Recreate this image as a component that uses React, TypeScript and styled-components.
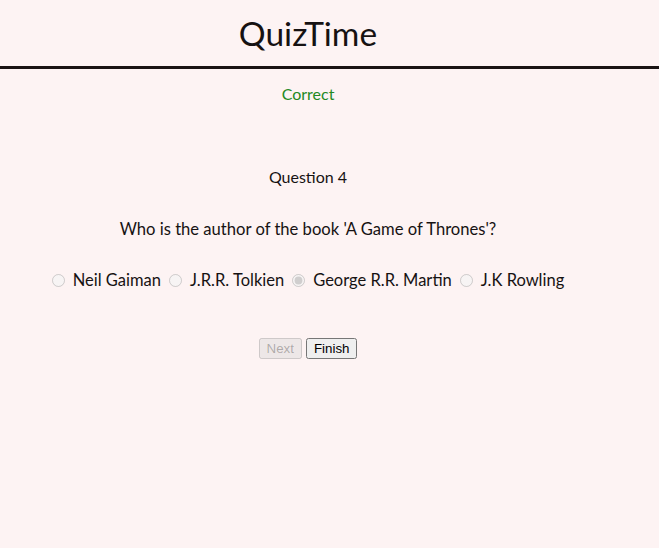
import React from "react";
import styled, { createGlobalStyle } from "styled-components";

const Global = createGlobalStyle`
    html, body {
        margin: 0;
        padding: 0;
        background: #fdf3f3;
        color: #161212;
        font-family: Lato, "Noto Sans", sans-serif;
    }
`;

const Header = {
    Root: styled.header`
        height: 66px;
        border-bottom: solid 3px #1a1313;
        padding-left: 8px;
    `,
    Title: styled.h1`
        width: 600px;
        margin: 0;
        padding-top: 14px;
        text-align: center;
        font-size: 33.5px;
        font-weight: 400;
        line-height: 38px;
    `
};

const Main = styled.main`
    width: 600px;
    margin-left: 8px;
    display: flex;
    flex-direction: column;
    align-items: center;
`;

const Status = styled.div<{ $ok: boolean }>`
    margin-top: 15px;
    font-size: 16px;
    line-height: 20px;
    color: ${p => (p.$ok ? "#23891f" : "#c0392b")};
`;

const Quiz = {
    Number: styled.div`
        margin-top: 63px;
        font-size: 16px;
        line-height: 20px;
    `,
    Question: styled.div`
        margin-top: 32px;
        font-size: 16.6px;
        line-height: 20px;
    `,
    Options: styled.div`
        margin-top: 31px;
        display: flex;
        align-items: center;
        gap: 8px;
        white-space: nowrap;
    `,
    Option: styled.label`
        display: flex;
        align-items: center;
        font-size: 16.5px;
        line-height: 20px;
    `,
    Radio: styled.input`
        margin: 0 8px 0 0;
        width: 13px;
        height: 13px;
    `
};

const Actions = styled.div`
    margin-top: 48px;
    display: flex;
    gap: 4px;
`;

const Button = styled.button`
    font-family: "Liberation Sans", Arial, sans-serif;
    font-size: 13.33px;
    padding: 1px 6px;
`;

const options = ["Neil Gaiman", "J.R.R. Tolkien", "George R.R. Martin", "J.K Rowling"];

export default function App() {
    const picked = 2;
    return (
        <>
            <Global />
            <Header.Root>
                <Header.Title>QuizTime</Header.Title>
            </Header.Root>
            <Main>
                <Status $ok>Correct</Status>
                <Quiz.Number>Question 4</Quiz.Number>
                <Quiz.Question>Who is the author of the book 'A Game of Thrones'?</Quiz.Question>
                <Quiz.Options>
                    {options.map((o, i) => (
                        <Quiz.Option key={o}>
                            <Quiz.Radio type="radio" name="answer" checked={i === picked} disabled readOnly />
                            {o}
                        </Quiz.Option>
                    ))}
                </Quiz.Options>
                <Actions>
                    <Button disabled>Next</Button>
                    <Button>Finish</Button>
                </Actions>
            </Main>
        </>
    );
}
